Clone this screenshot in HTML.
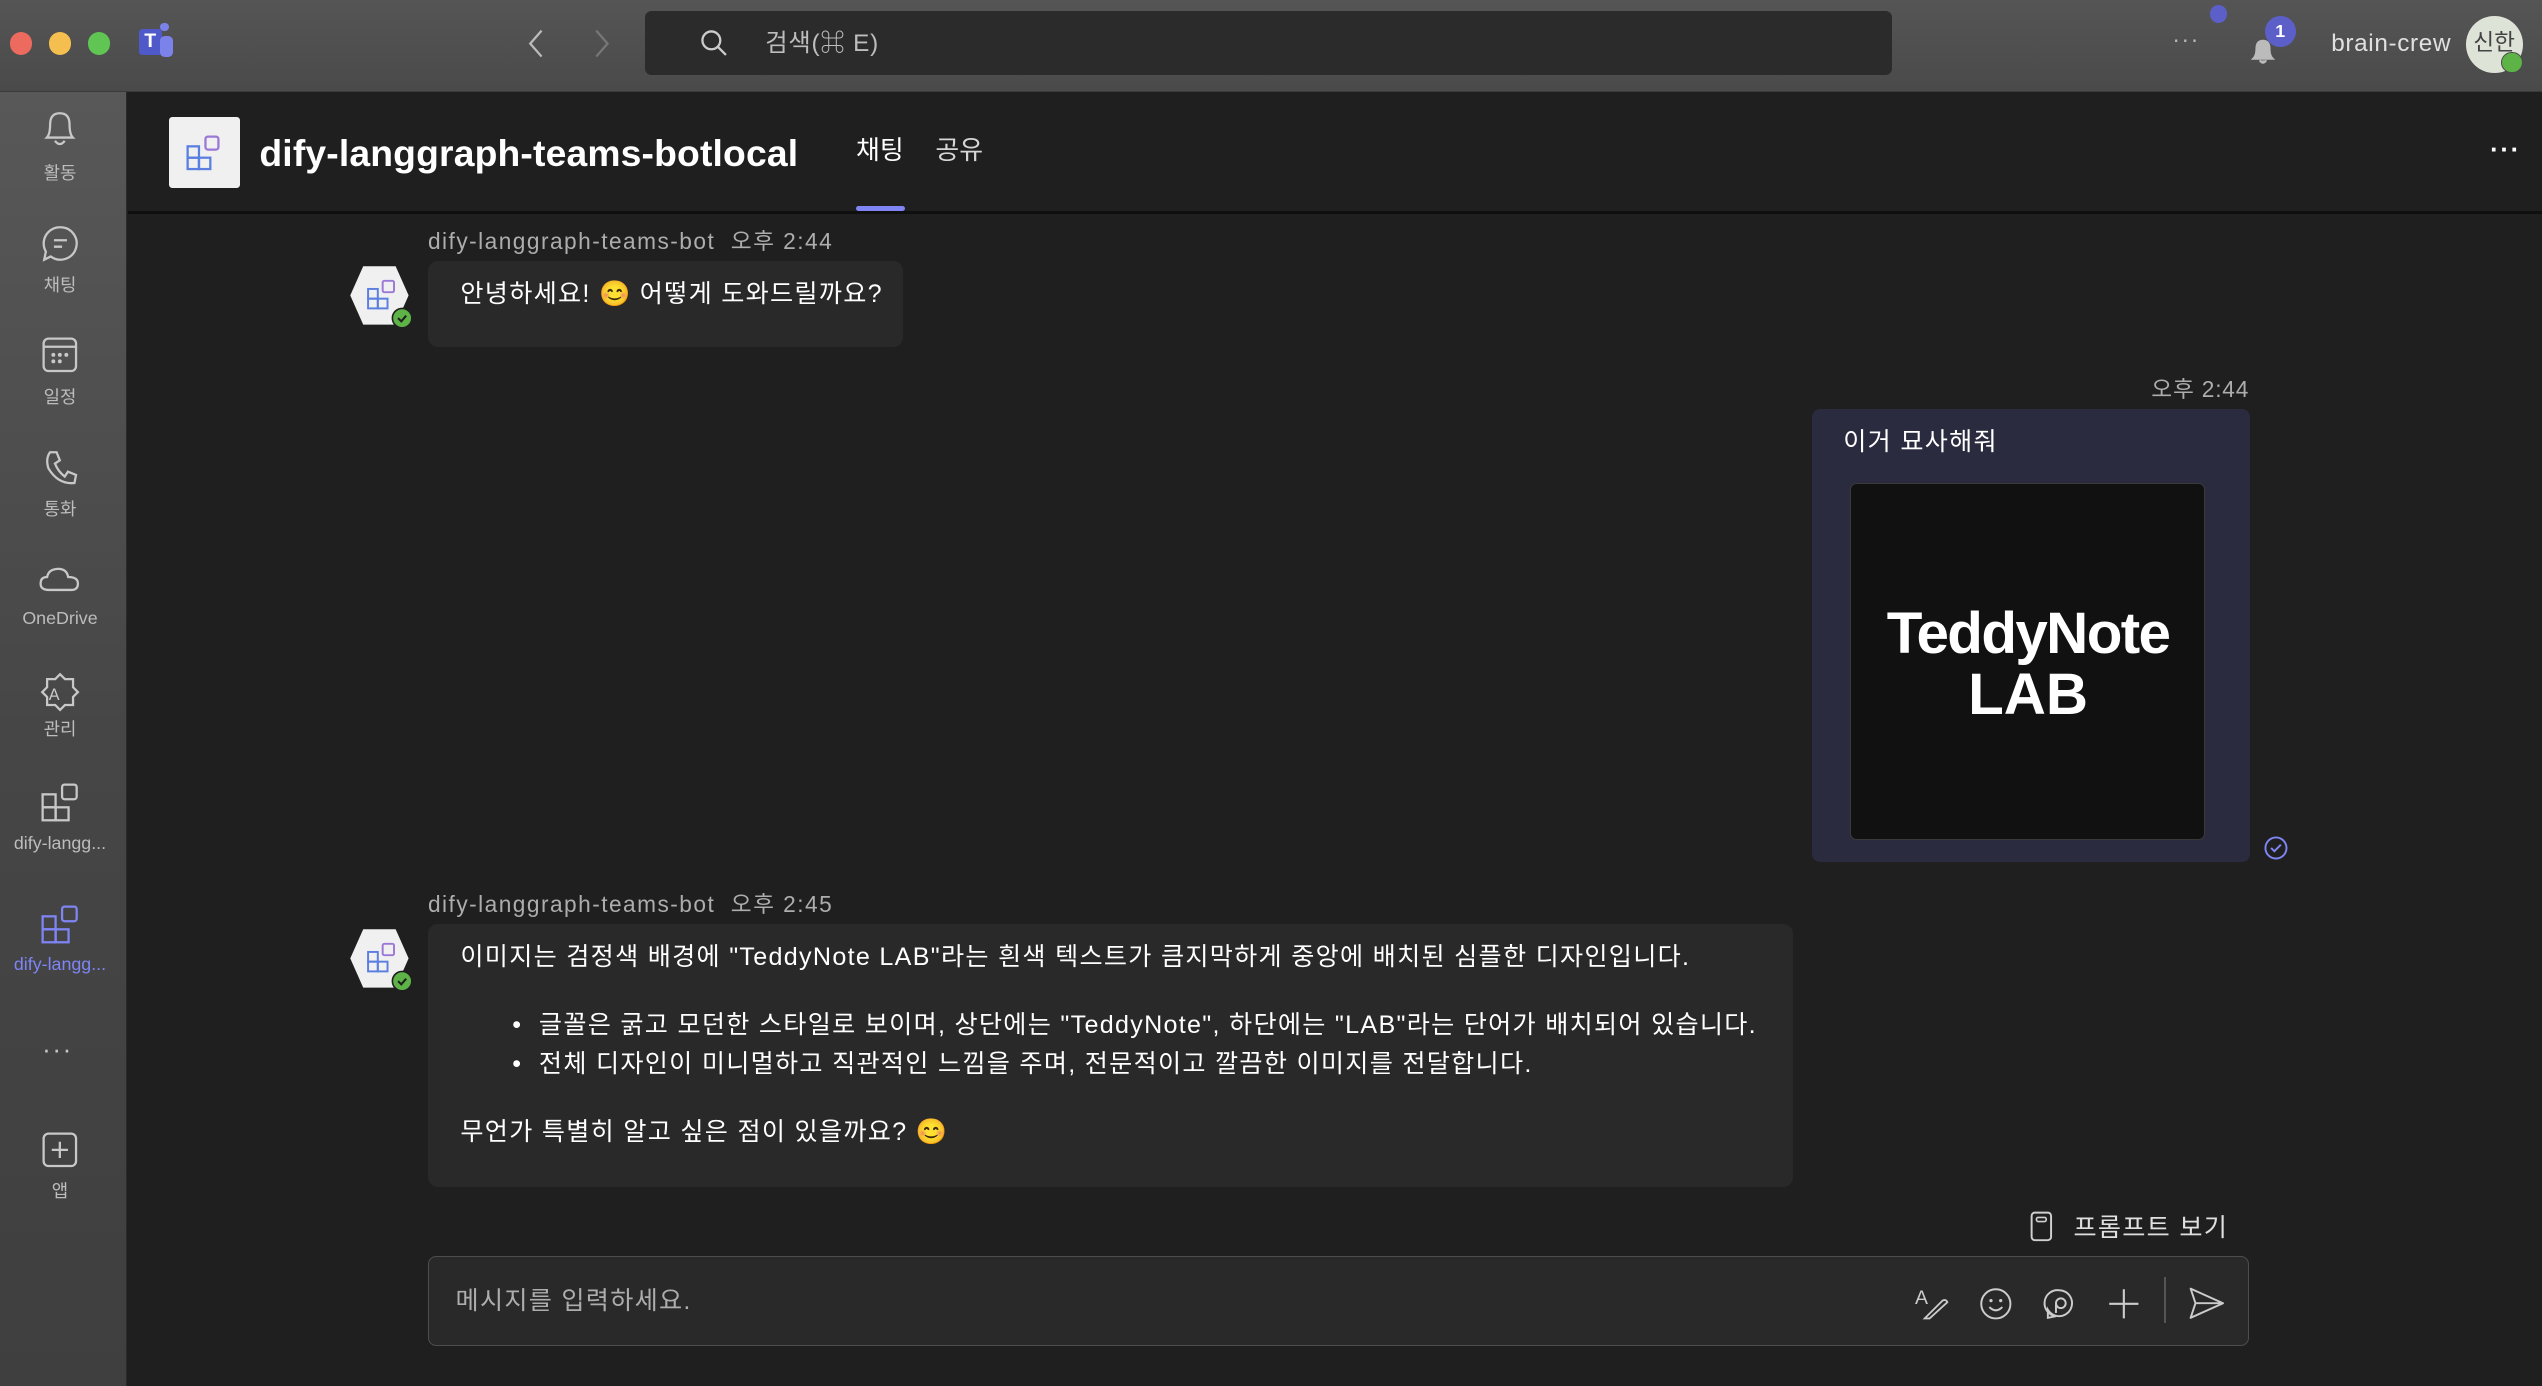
<!DOCTYPE html>
<html><head><meta charset="utf-8">
<style>
html,body{margin:0;padding:0;background:#1f1f1f;overflow:hidden}
#r{width:1568px;height:855px;zoom:1.62117;position:relative;font-family:"Liberation Sans","Noto Sans CJK KR",sans-serif;color:#fff;background:#1f1f1f;overflow:hidden}
.a{position:absolute}
.t{position:absolute;white-space:nowrap;line-height:1}
.m{font-size:15.5px;letter-spacing:0.8px}
svg{position:absolute;overflow:visible}
.lbl{position:absolute;width:74px;left:0;text-align:center;font-size:11px;color:#bdbdbd;line-height:1}
</style></head><body><div id="r">
<!-- top bar -->
<div class="a" style="left:0;top:0;width:1568px;height:56px;background:linear-gradient(#555,#4a4a4a);border-bottom:1px solid #3a3a3a"></div>
<div class="a" style="left:6px;top:20px;width:14px;height:14px;border-radius:50%;background:#ec6a5e"></div>
<div class="a" style="left:30px;top:20px;width:14px;height:14px;border-radius:50%;background:#f4bf4f"></div>
<div class="a" style="left:54px;top:20px;width:14px;height:14px;border-radius:50%;background:#61c554"></div>
<div class="a" style="left:86px;top:18px;width:14px;height:16px;background:#5059c9;border-radius:2px"></div>
<div class="t" style="left:89px;top:20px;font-size:12px;font-weight:bold">T</div>
<div class="a" style="left:99px;top:22px;width:8px;height:13px;background:#7b83eb;border-radius:3px"></div>
<div class="a" style="left:99px;top:14px;width:5px;height:5px;background:#7b83eb;border-radius:50%"></div>
<svg style="left:325px;top:18px" width="12" height="18"><path d="M9 1 L2 9 L9 17" stroke="#bbb" stroke-width="1.4" fill="none"/></svg>
<svg style="left:366px;top:18px" width="12" height="18"><path d="M2 1 L9 9 L2 17" stroke="#777" stroke-width="1.4" fill="none"/></svg>
<div class="a" style="left:398px;top:7px;width:769px;height:39px;background:#2b2b2b;border-radius:4px"></div>
<svg style="left:432px;top:18px" width="18" height="18"><circle cx="7" cy="7" r="5.5" stroke="#ccc" stroke-width="1.4" fill="none"/><path d="M11 11 L16 16" stroke="#ccc" stroke-width="1.4"/></svg>
<div class="t" style="left:472px;top:20px;font-size:15px;color:#bdbdbd;letter-spacing:0.5px">검색(⌘ E)</div>
<div class="t" style="left:1340px;top:17px;font-size:14px;color:#bbb;letter-spacing:1px">···</div>
<div class="a" style="left:1363px;top:3px;width:11px;height:11px;border-radius:50%;background:#5b5fc7"></div>
<svg style="left:1388px;top:22px" width="22" height="18"><path d="M2 14 Q4 12 4 8 Q4 3 8 3 Q12 3 12 8 Q12 12 14 14 Z M6 15 Q8 18 10 15" stroke="#bbb" stroke-width="1.3" fill="#bbb"/></svg>
<div class="a" style="left:1397px;top:10px;width:19px;height:19px;border-radius:50%;background:#5b5fc7;font-size:11px;font-weight:bold;text-align:center;line-height:19px">1</div>
<div class="t" style="left:1438px;top:20px;font-size:15px;color:#e0e0e0;letter-spacing:0.4px">brain-crew</div>
<div class="a" style="left:1521px;top:10px;width:35px;height:35px;border-radius:50%;background:#dde3d6;color:#444;font-size:14px;text-align:center;line-height:33px">신한</div>
<div class="a" style="left:1543px;top:32px;width:12px;height:12px;border-radius:50%;background:#5eb346;border:1px solid #4a4a4a"></div>
<!-- sidebar -->
<div class="a" style="left:0;top:57px;width:78px;height:798px;background:linear-gradient(#585858,#464646 50%,#3f3f3f);border-right:1px solid #2a2a2a"></div>
<svg style="left:26px;top:68px" width="22" height="24"><path d="M3 17 Q5 15 5 9 Q5 2 11 2 Q17 2 17 9 Q17 15 19 17 Z M8 19 Q11 23 14 19" stroke="#c8c8c8" stroke-width="1.4" fill="none"/></svg>
<div class="lbl" style="top:102px">활동</div>
<svg style="left:25px;top:138px" width="24" height="24"><path d="M12 2 A10 10 0 1 1 6 20 L2 22 L3 17 A10 10 0 0 1 12 2 Z" stroke="#c8c8c8" stroke-width="1.4" fill="none"/><path d="M8 10 H16 M8 14 H13" stroke="#c8c8c8" stroke-width="1.4"/></svg>
<div class="lbl" style="top:171px">채팅</div>
<svg style="left:26px;top:208px" width="22" height="22"><rect x="1" y="1" width="20" height="20" rx="3" stroke="#c8c8c8" stroke-width="1.4" fill="none"/><path d="M1 6 H21" stroke="#c8c8c8" stroke-width="1.4"/><circle cx="7" cy="11" r="1.2" fill="#c8c8c8"/><circle cx="11" cy="11" r="1.2" fill="#c8c8c8"/><circle cx="15" cy="11" r="1.2" fill="#c8c8c8"/><circle cx="7" cy="15" r="1.2" fill="#c8c8c8"/><circle cx="11" cy="15" r="1.2" fill="#c8c8c8"/></svg>
<div class="lbl" style="top:240px">일정</div>
<svg style="left:26px;top:277px" width="22" height="24"><path d="M5 2 L9 2 L11 7 L8 9 Q10 14 14 17 L16 14 L21 16 L20 21 Q10 22 4 12 Q2 6 5 2 Z" stroke="#c8c8c8" stroke-width="1.4" fill="none"/></svg>
<div class="lbl" style="top:309px">통화</div>
<svg style="left:24px;top:348px" width="26" height="18"><path d="M6 16 Q1 16 1 12 Q1 8 5 8 Q6 3 12 3 Q17 3 18 8 Q24 8 24 12 Q24 16 20 16 Z" stroke="#c8c8c8" stroke-width="1.4" fill="none"/></svg>
<div class="lbl" style="top:376px">OneDrive</div>
<svg style="left:24px;top:414px" width="26" height="26"><path d="M13 2 L16 5 L21 5 L21 10 L24 13 L21 16 L21 21 L16 21 L13 24 L10 21 L5 21 L5 16 L2 13 L5 10 L5 5 L10 5 Z" stroke="#c8c8c8" stroke-width="1.4" fill="none"/><text x="6" y="18" font-size="10" fill="#c8c8c8" font-family="Liberation Sans">A</text></svg>
<div class="lbl" style="top:445px">관리</div>
<svg style="left:25px;top:483px" width="24" height="24"><rect x="1" y="7" width="8" height="8" stroke="#c8c8c8" stroke-width="1.4" fill="none"/><rect x="1" y="15" width="8" height="8" stroke="#c8c8c8" stroke-width="1.4" fill="none"/><rect x="9" y="15" width="8" height="8" stroke="#c8c8c8" stroke-width="1.4" fill="none"/><rect x="13" y="1" width="9" height="9" rx="1.5" stroke="#c8c8c8" stroke-width="1.4" fill="none"/></svg>
<div class="lbl" style="top:515px">dify-langg...</div>
<svg style="left:25px;top:558px" width="24" height="24"><rect x="1" y="7" width="8" height="8" stroke="#7f85f5" stroke-width="1.4" fill="none"/><rect x="1" y="15" width="8" height="8" stroke="#7f85f5" stroke-width="1.4" fill="none"/><rect x="9" y="15" width="8" height="8" stroke="#7f85f5" stroke-width="1.4" fill="none"/><rect x="13" y="1" width="9" height="9" rx="1.5" stroke="#7f85f5" stroke-width="1.4" fill="none"/></svg>
<div class="lbl" style="top:590px;color:#7f85f5">dify-langg...</div>
<div class="t" style="left:26px;top:640px;font-size:16px;color:#c8c8c8;letter-spacing:1px">···</div>
<svg style="left:26px;top:698px" width="22" height="22"><rect x="1" y="1" width="20" height="20" rx="3" stroke="#c8c8c8" stroke-width="1.4" fill="none"/><path d="M11 6 V16 M6 11 H16" stroke="#c8c8c8" stroke-width="1.4"/></svg>
<div class="lbl" style="top:730px">앱</div>
<!-- header -->
<div class="a" style="left:104px;top:72px;width:44px;height:44px;background:#f0f0f0;border-radius:2px"></div>
<svg style="left:115px;top:83px" width="24" height="24"><rect x="1" y="7" width="7" height="7" stroke="#5b7fe0" stroke-width="1.4" fill="none"/><rect x="1" y="14" width="7" height="7" stroke="#5b7fe0" stroke-width="1.4" fill="none"/><rect x="8" y="14" width="7" height="7" stroke="#5b7fe0" stroke-width="1.4" fill="none"/><rect x="12" y="1" width="8" height="8" rx="1.5" stroke="#9a78d8" stroke-width="1.4" fill="none"/></svg>
<div class="t" style="left:160px;top:83px;font-size:23px;font-weight:bold;letter-spacing:0.1px">dify-langgraph-teams-botlocal</div>
<div class="t" style="left:528px;top:86px;font-size:16px">채팅</div>
<div class="a" style="left:528px;top:127px;width:30px;height:3px;background:#7f85f5;border-radius:2px"></div>
<div class="t" style="left:577px;top:86px;font-size:16px;color:#d6d6d6">공유</div>
<div class="t" style="left:1536px;top:85px;font-size:16px;font-weight:bold;letter-spacing:1px">···</div>
<div class="a" style="left:79px;top:130px;width:1489px;height:2px;background:#0f0f0f"></div>
<!-- message 1 -->
<div class="t" style="left:264px;top:142px;font-size:14px;color:#adadad;letter-spacing:0.9px">dify-langgraph-teams-bot&nbsp;&nbsp;오후 2:44</div>
<svg style="left:214px;top:162px" width="42" height="42"><path d="M10 2 H30 L38 20 L30 38 H10 L2 20 Z" fill="#f0f0f0"/><rect x="13" y="16" width="6" height="6" stroke="#5b7fe0" stroke-width="1.2" fill="none"/><rect x="13" y="22" width="6" height="6" stroke="#5b7fe0" stroke-width="1.2" fill="none"/><rect x="19" y="22" width="6" height="6" stroke="#5b7fe0" stroke-width="1.2" fill="none"/><rect x="22" y="11" width="7" height="7" rx="1" stroke="#9a78d8" stroke-width="1.2" fill="none"/><circle cx="34" cy="34" r="6" fill="#5eb346" stroke="#1f1f1f" stroke-width="1"/><path d="M31.5 34 L33.5 36 L36.5 32.5" stroke="#1f1f1f" stroke-width="1.3" fill="none"/></svg>
<div class="a" style="left:264px;top:161px;width:293px;height:53px;background:#292929;border-radius:6px"></div>
<div class="t m" style="left:284px;top:174px">안녕하세요! 😊 어떻게 도와드릴까요?</div>
<!-- message 2 -->
<div class="t" style="left:1327px;top:233px;font-size:14px;color:#adadad;letter-spacing:0.5px">오후 2:44</div>
<div class="a" style="left:1118px;top:252px;width:270px;height:280px;background:#2b2b40;border-radius:5px"></div>
<div class="t m" style="left:1137px;top:265px">이거 묘사해줘</div>
<div class="a" style="left:1141px;top:298px;width:218px;height:219px;background:#111;border:1px solid #3a3a3a;border-radius:4px"></div>
<div class="t" style="left:1141px;top:373px;width:220px;text-align:center;font-size:36px;font-weight:bold;letter-spacing:-1px">TeddyNote</div>
<div class="t" style="left:1141px;top:411px;width:220px;text-align:center;font-size:36px;font-weight:bold">LAB</div>
<svg style="left:1396px;top:515px" width="16" height="16"><circle cx="8" cy="8" r="6.5" stroke="#7f85f5" stroke-width="1.2" fill="none"/><path d="M5 8 L7 10 L11 6" stroke="#7f85f5" stroke-width="1.2" fill="none"/></svg>
<!-- message 3 -->
<div class="t" style="left:264px;top:551px;font-size:14px;color:#adadad;letter-spacing:0.9px">dify-langgraph-teams-bot&nbsp;&nbsp;오후 2:45</div>
<svg style="left:214px;top:571px" width="42" height="42"><path d="M10 2 H30 L38 20 L30 38 H10 L2 20 Z" fill="#f0f0f0"/><rect x="13" y="16" width="6" height="6" stroke="#5b7fe0" stroke-width="1.2" fill="none"/><rect x="13" y="22" width="6" height="6" stroke="#5b7fe0" stroke-width="1.2" fill="none"/><rect x="19" y="22" width="6" height="6" stroke="#5b7fe0" stroke-width="1.2" fill="none"/><rect x="22" y="11" width="7" height="7" rx="1" stroke="#9a78d8" stroke-width="1.2" fill="none"/><circle cx="34" cy="34" r="6" fill="#5eb346" stroke="#1f1f1f" stroke-width="1"/><path d="M31.5 34 L33.5 36 L36.5 32.5" stroke="#1f1f1f" stroke-width="1.3" fill="none"/></svg>
<div class="a" style="left:264px;top:570px;width:842px;height:162px;background:#292929;border-radius:6px"></div>
<div class="t m" style="left:284px;top:583px">이미지는 검정색 배경에 "TeddyNote LAB"라는 흰색 텍스트가 큼지막하게 중앙에 배치된 심플한 디자인입니다.</div>
<div class="t m" style="left:316px;top:625px">•&nbsp; 글꼴은 굵고 모던한 스타일로 보이며, 상단에는 "TeddyNote", 하단에는 "LAB"라는 단어가 배치되어 있습니다.</div>
<div class="t m" style="left:316px;top:649px">•&nbsp; 전체 디자인이 미니멀하고 직관적인 느낌을 주며, 전문적이고 깔끔한 이미지를 전달합니다.</div>
<div class="t m" style="left:284px;top:691px">무언가 특별히 알고 싶은 점이 있을까요? 😊</div>
<!-- prompt -->
<svg style="left:1252px;top:747px" width="14" height="20"><rect x="1" y="1" width="12" height="17" rx="2" stroke="#d0d0d0" stroke-width="1.2" fill="none"/><rect x="4" y="4" width="6" height="2.5" rx="1" stroke="#d0d0d0" stroke-width="1" fill="none"/></svg>
<div class="t m" style="left:1279px;top:750px;color:#e0e0e0">프롬프트 보기</div>
<!-- input -->
<div class="a" style="left:264px;top:775px;width:1122px;height:54px;background:#292929;border:1px solid #4d4d4d;border-radius:5px"></div>
<div class="t m" style="left:281px;top:795px;color:#adadad">메시지를 입력하세요.</div>
<svg style="left:1181px;top:793px" width="22" height="22"><text x="0" y="11" font-size="12" fill="#ccc" font-family="Liberation Sans">A</text><path d="M6 20 L17 9 Q19 8 20 10 L9 20 Z" stroke="#ccc" stroke-width="1.1" fill="none"/></svg>
<svg style="left:1220px;top:793px" width="22" height="22"><circle cx="11" cy="11" r="9" stroke="#ccc" stroke-width="1.2" fill="none"/><circle cx="8" cy="9" r="1" fill="#ccc"/><circle cx="14" cy="9" r="1" fill="#ccc"/><path d="M7 13 Q11 17 15 13" stroke="#ccc" stroke-width="1.2" fill="none"/></svg>
<svg style="left:1260px;top:794px" width="22" height="22"><path d="M10 2 A8 8 0 1 1 3 14 L3 19 L8 18 A8 8 0 0 1 10 2" stroke="#ccc" stroke-width="1.2" fill="none"/><circle cx="11" cy="10" r="3" stroke="#ccc" stroke-width="1.2" fill="none"/><path d="M8 10 V16" stroke="#ccc" stroke-width="1.2"/></svg>
<svg style="left:1299px;top:793px" width="22" height="22"><path d="M11 2 V20 M2 11 H20" stroke="#ccc" stroke-width="1.3"/></svg>
<div class="a" style="left:1335px;top:788px;width:1px;height:28px;background:#555"></div>
<svg style="left:1350px;top:794px" width="22" height="22"><path d="M1 1 L21 10 L1 19 L4 10 Z M4 10 H21" stroke="#ccc" stroke-width="1.2" fill="none" stroke-linejoin="round"/></svg>
</div></body></html>
